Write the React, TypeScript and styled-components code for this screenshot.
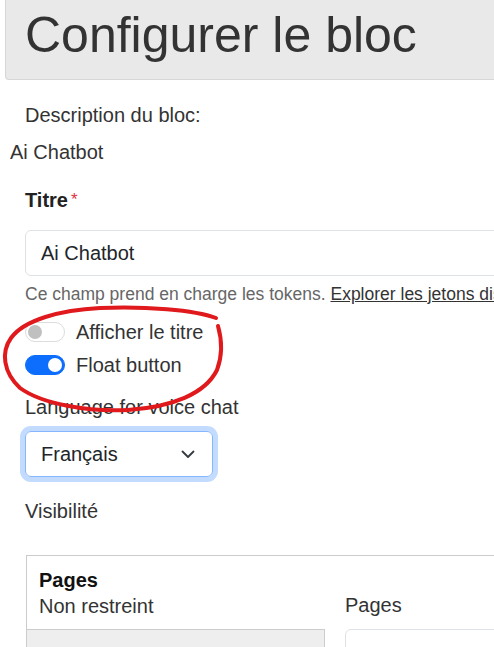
import React from "react";
import styled, { createGlobalStyle } from "styled-components";

const GlobalStyle = createGlobalStyle`
  html, body { margin: 0; padding: 0; background: #fff; overflow: hidden; }
  body { font-family: "Liberation Sans", Arial, sans-serif; color: #333; }
`;

const Page = styled.div`
  position: relative;
  width: 640px;
  height: 647px;
  overflow: hidden;
`;

const Header = styled.header`
  box-sizing: border-box;
  height: 80px;
  margin-left: 5px;
  padding: 10px 0 0 19px;
  background: #e9e9e9;
  border-left: 1px solid #d6d6d6;
  border-bottom: 1px solid #d6d6d6;
  border-bottom-left-radius: 4px;
`;

const Title = styled.h1`
  margin: 0;
  font-size: 50px;
  line-height: 50px;
  font-weight: 400;
  color: #333;
`;

const Main = styled.main`
  display: flex;
  flex-direction: column;
  padding-left: 25px;
`;

const Text = styled.div<{ $mt: number; $bold?: boolean; $shift?: number }>`
  margin-top: ${(p) => p.$mt}px;
  margin-left: ${(p) => p.$shift ?? 0}px;
  font-size: 20px;
  line-height: 30px;
  font-weight: ${(p) => (p.$bold ? 700 : 400)};
  color: ${(p) => (p.$bold ? "#222" : "#333")};
`;

const Required = styled.span`
  color: #dc3545;
  font-size: 17px;
  font-weight: 400;
  margin-left: 3px;
  vertical-align: 2px;
`;

const TextInput = styled.input`
  box-sizing: border-box;
  height: 46px;
  margin-top: 15px;
  padding: 0 15px;
  border: 1px solid #dee2e6;
  border-radius: 6px;
  font: inherit;
  font-size: 20px;
  color: #212529;
  background: #fff;
  outline: none;
`;

const Help = styled.div`
  margin-top: 5px;
  font-size: 17.5px;
  line-height: 26px;
  color: #666;
  white-space: nowrap;
`;

const HelpLink = styled.a`
  color: #333;
  text-decoration: underline;
`;

const SwitchRow = styled.label<{ $mt: number }>`
  display: flex;
  align-items: center;
  margin-top: ${(p) => p.$mt}px;
  height: 30px;
  font-size: 20px;
  color: #333;
`;

const Switch = styled.span<{ $on: boolean }>`
  box-sizing: border-box;
  display: flex;
  align-items: center;
  justify-content: ${(p) => (p.$on ? "flex-end" : "flex-start")};
  width: 40px;
  height: 20px;
  margin-right: 11px;
  padding: 0 2px;
  border-radius: 10px;
  border: 1px solid ${(p) => (p.$on ? "#0d6efd" : "#dcdcdc")};
  background: ${(p) => (p.$on ? "#0d6efd" : "#fff")};

  &::after {
    content: "";
    width: 14px;
    height: 14px;
    border-radius: 50%;
    background: ${(p) => (p.$on ? "#fff" : "#c0c0c0")};
  }
`;

const Select = styled.div`
  box-sizing: border-box;
  display: flex;
  align-items: center;
  justify-content: space-between;
  width: 188px;
  height: 46px;
  margin-top: 9px;
  padding: 0 17px 0 15px;
  border: 1px solid #86b7fe;
  border-radius: 6px;
  box-shadow: 0 0 0 5px #c3dbfe;
  font-size: 20px;
  color: #212529;
`;

const Chevron = styled.svg`
  width: 14px;
  height: 9px;
`;

const Tabs = styled.section`
  display: grid;
  grid-template-columns: 298px 1fr;
  margin-top: 29px;
  margin-left: 1px;
  height: 120px;
  border: 1px solid #ccc;
  border-right: none;
`;

const TabColumn = styled.div`
  display: flex;
  flex-direction: column;
`;

const TabActive = styled.div`
  padding: 11px 12px 10px;
  font-size: 20px;
  line-height: 26px;
`;

const TabTitle = styled.div`
  font-weight: 700;
  color: #111;
`;

const TabSummary = styled.div`
  color: #333;
`;

const TabIdle = styled.div`
  flex: 1;
  background: #eee;
  border-top: 1px solid #ccc;
  border-right: 1px solid #ccc;
`;

const Pane = styled.div`
  display: flex;
  flex-direction: column;
  padding-left: 20px;
`;

const PaneLabel = styled.div`
  margin-top: 34px;
  font-size: 20px;
  line-height: 30px;
  color: #333;
`;

const TextArea = styled.div`
  margin-top: 9px;
  height: 80px;
  border: 1px solid #dee2e6;
  border-radius: 6px;
`;

const Annotation = styled.svg`
  position: absolute;
  top: 0;
  left: 0;
  width: 494px;
  height: 647px;
  pointer-events: none;
`;

export default function App() {
  return (
    <>
      <GlobalStyle />
      <Page>
        <Header>
          <Title>Configurer le bloc</Title>
        </Header>
        <Main>
          <Text $mt={20}>Description du bloc:</Text>
          <Text $mt={7} $shift={-15}>Ai Chatbot</Text>
          <Text $mt={18} $bold>
            Titre<Required>*</Required>
          </Text>
          <TextInput readOnly value="Ai Chatbot" />
          <Help>
            Ce champ prend en charge les tokens.{" "}
            <HelpLink href="#">Explorer les jetons disponibles.</HelpLink>
          </Help>
          <SwitchRow $mt={10}>
            <Switch $on={false} />
            Afficher le titre
          </SwitchRow>
          <SwitchRow $mt={3}>
            <Switch $on />
            Float button
          </SwitchRow>
          <Text $mt={12}>Language for voice chat</Text>
          <Select>
            <span>Français</span>
            <Chevron viewBox="0 0 14 9">
              <path d="M1.5 1.5 7 7l5.5-5.5" fill="none" stroke="#343a40" strokeWidth="1.8" strokeLinecap="round" strokeLinejoin="round" />
            </Chevron>
          </Select>
          <Text $mt={19}>Visibilité</Text>
          <Tabs>
            <TabColumn>
              <TabActive>
                <TabTitle>Pages</TabTitle>
                <TabSummary>Non restreint</TabSummary>
              </TabActive>
              <TabIdle />
            </TabColumn>
            <Pane>
              <PaneLabel>Pages</PaneLabel>
              <TextArea />
            </Pane>
          </Tabs>
        </Main>
        <Annotation viewBox="0 0 494 647">
          <path
            d="M216 318 C195 310, 145 306, 100 308 C60 310, 24 320, 11 338 C1 352, 3 372, 20 388 C42 404, 88 412, 128 410 C172 407, 205 394, 217 370 C223 354, 222 340, 218 326"
            fill="none"
            stroke="#e0191c"
            strokeWidth="4"
            strokeLinecap="round"
            strokeLinejoin="round"
          />
        </Annotation>
      </Page>
    </>
  );
}
